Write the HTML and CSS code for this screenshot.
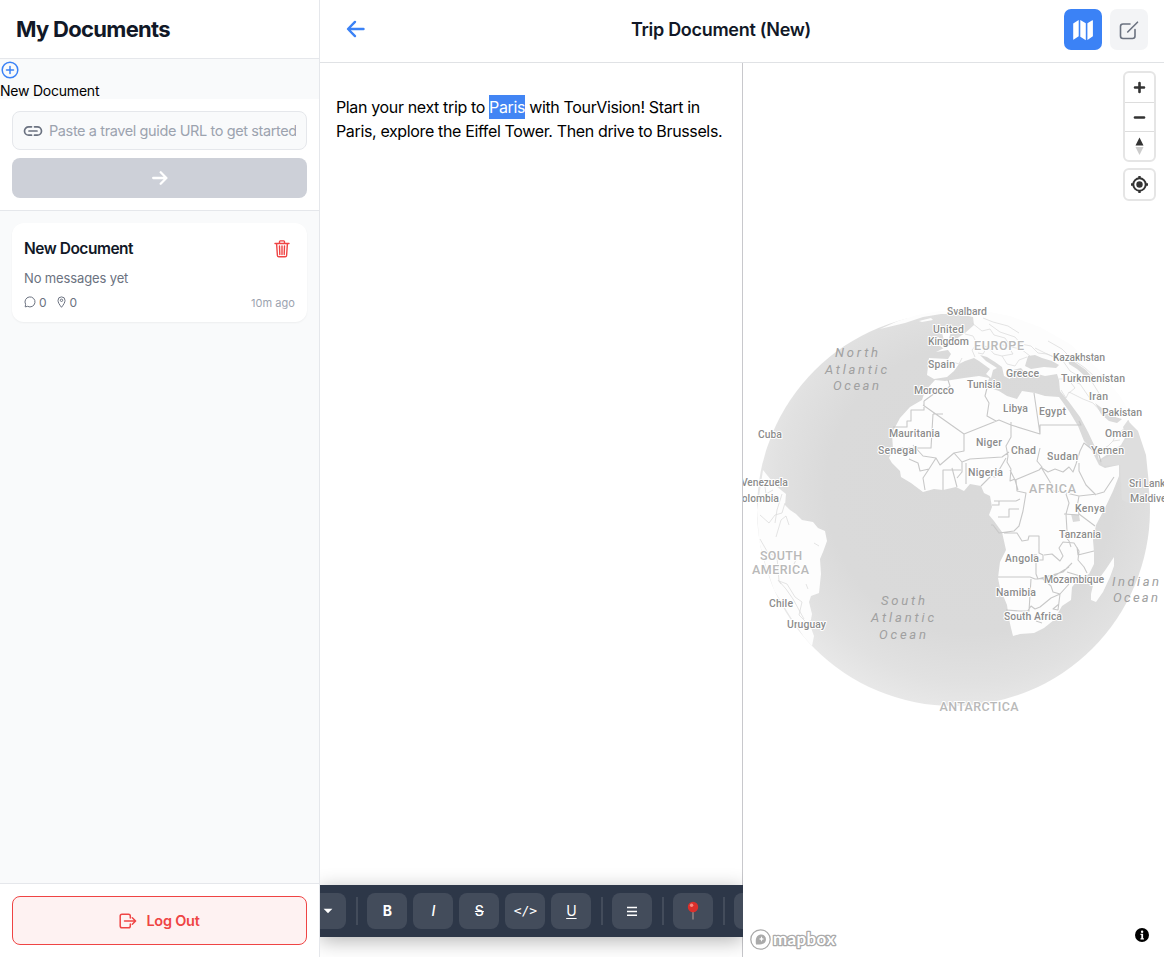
FILE: index.html
```html
<!DOCTYPE html>
<html lang="en">
<head>
<meta charset="utf-8">
<title>Trip Document (New)</title>
<link rel="stylesheet" href="styles.css">
</head>
<body>
<div class="app">
  <aside class="sidebar">
    <header class="side-head"><h1 class="side-title">My Documents</h1></header>
    <div class="new-doc">
      <svg class="plus" viewBox="0 0 20 20" width="20" height="20"><circle cx="10" cy="10" r="7.8"/><path d="M10 6.5v7M6.5 10h7"/></svg>
      <span class="new-label">New Document</span>
    </div>
    <div class="url-form">
      <div class="url-field">
        <svg class="link" viewBox="0 0 20 12" width="20" height="12"><path d="M8.500 1.800H5.700a4.200 4.200 0 0 0 0 8.400h2.800M11.500 1.800h2.800a4.200 4.200 0 0 1 0 8.400h-2.800M6 6h8"/></svg>
        <span class="url-placeholder">Paste a travel guide URL to get started</span>
      </div>
      <div class="go"><svg viewBox="0 0 16 14" width="16" height="14"><path d="M1.200 7h13M8.700 1.300L14.400 7l-5.700 5.700"/></svg></div>
    </div>
    <div class="doc-list">
      <article class="doc">
        <div class="doc-top">
          <h2 class="doc-title">New Document</h2>
          <svg class="trash" viewBox="0 0 16 18" width="16" height="18"><path d="M1 3.500h14M5.500 3.200V1.700q0-.8.8-.8h3.400q.8 0 .8.8v1.500M2.600 3.700l.8 11.800q.1 1.300 1.400 1.300h6.400q1.300 0 1.400-1.300l.8-11.800M5.500 6l.3 8.500M8 6v8.500M10.500 6l-.3 8.500"/></svg>
        </div>
        <p class="doc-text">No messages yet</p>
        <div class="doc-meta">
          <svg class="chat" viewBox="0 0 12 12" width="12" height="12"><path d="M1.200 10.900l.4-2.600a5 5 0 1 1 2 2z"/></svg>
          <span class="count">0</span>
          <svg class="pin" viewBox="0 0 9 12" width="9" height="12"><path d="M4.500 11.300C2.200 8.300 1 6.300 1 4.400a3.500 3.500 0 0 1 7 0c0 1.900-1.200 3.900-3.500 6.900z"/><circle cx="4.500" cy="4.300" r="1.200"/></svg>
          <span class="count">0</span>
          <span class="ago">10m ago</span>
        </div>
      </article>
    </div>
    <footer class="side-foot">
      <div class="logout">
        <svg viewBox="0 0 18 16" width="18" height="16"><path d="M11.300 5V3q0-1.800-1.800-1.800H3Q1.200 1.200 1.200 3v10q0 1.800 1.800 1.800h6.500q1.800 0 1.800-1.800v-2M5.500 8h11M13.300 4.800L16.600 8l-3.300 3.200"/></svg>
        <span class="logout-text">Log Out</span>
      </div>
    </footer>
  </aside>
  <main class="main">
    <header class="top">
      <svg class="back" viewBox="0 0 20 18" width="20" height="18"><path d="M17.500 9H2.200M9 1.900L2 9l7 7.100"/></svg>
      <h2 class="top-title">Trip Document (New)</h2>
      <div class="views">
        <div class="view active"><svg viewBox="0 0 22 22" width="22" height="22"><path d="M1.200 4.500L6.700 1v16.300L1.800 20.600q-.6.300-.6-.4zM8.300 1l5.500 3.200v17L8.300 17.800zM15.400 4.200L20.300 1.300q.6-.3.600.4v15.600l-5.500 3.700z"/></svg></div>
        <div class="view"><svg class="edit" viewBox="0 0 20 20" width="20" height="20"><path d="M11 4H4Q1.500 4 1.500 6.500v9.500Q1.500 18.500 4 18.500h9.500Q16 18.500 16 16V9.500M8.700 12l9.800-9.800"/></svg></div>
      </div>
    </header>
    <div class="work">
      <section class="editor">
        <div class="page">
          <p class="prose">Plan your next trip to <mark class="place">Paris</mark> with TourVision! Start in<br>Paris, explore the Eiffel Tower. Then drive to Brussels.</p>
        </div>
        <div class="toolbar">
          <span class="tool cut-left"><svg viewBox="0 0 10 6" width="10" height="6"><path d="M.6.700h8.800L5 5.200z" fill="#fff"/></svg></span>
          <span class="sep"></span>
          <span class="tool bold">B</span>
          <span class="tool italic">I</span>
          <span class="tool strike">S</span>
          <span class="tool code">&lt;/&gt;</span>
          <span class="tool under">U</span>
          <span class="sep"></span>
          <span class="tool"><svg viewBox="0 0 10 10" width="10" height="10"><path d="M0 1.500h10M0 5.500h10M0 9.300h10" stroke="#fff" stroke-width="1.500"/></svg></span>
          <span class="sep"></span>
          <span class="tool"><svg viewBox="0 0 14 20" width="14" height="20"><path d="M7 9v9" stroke="#8f8583" stroke-width="1.500" stroke-linecap="round"/><circle cx="7" cy="6" r="5.200" fill="#dc2f2b"/><circle cx="5.600" cy="4.200" r="1.700" fill="#f98a80"/></svg></span>
          <span class="sep"></span>
          <span class="tool"></span>
        </div>
      </section>
      <section class="map">
        <svg class="globe" viewBox="743 63 421 894" width="421" height="894">
          <defs>
            <radialGradient id="sea" gradientUnits="userSpaceOnUse" cx="970" cy="490" r="240">
              <stop offset="0" stop-color="#d9d9d9"/><stop offset=".6" stop-color="#dadada"/><stop offset=".8" stop-color="#e1e1e1"/><stop offset="1" stop-color="#ececec"/>
            </radialGradient>
          </defs>
          <circle cx="953.500" cy="509.500" r="196.500" fill="url(#sea)"/>
          <g class="land">
            <path d="M880 329L898 321 917 315 940 311 960 310 985 311 1010 316 1040 327 1070 344 1098 369 1120 396 1134 420 1128 420 1123 427 1126 436 1121 445 1111 452 1099 460 1096 449 1088 432 1080 417 1069 402 1060 391 1059 380 1057 374 1045 376 1034 373 1027 375 1021 368 1013 370 1010 379 1004 376 1002 367 995 362 987 357 980 355 986 361 997 368 993 370 991 378 986 374 990 369 979 361 974 358 965 361 959 364 954 371 947 377 934 379 927 375 929 358 948 359 951 354 948 350 936 352 950 345 959 337 965 333 974 325 973 317 960 314 941 314 923 317 905 323z"/>
            <path d="M935 380L945 381 964 378 979 376 989 378 987 387 999 391 1007 396 1017 399 1022 391 1035 393 1045 396 1059 397 1069 411 1078 426 1084 441 1091 449 1099 465 1105 468 1119 465 1119 476 1113 491 1105 508 1096 525 1093 540 1094 552 1094 564 1089 574 1078 580 1072 587 1071 600 1062 606 1054 620 1044 628 1034 633 1020 634 1013 636 1011 628 1009 619 1007 605 1000 588 998 578 1000 562 1006 550 1002 532 994 521 989 515 992 507 990 496 984 493 981 486 970 484 964 491 956 487 943 490 934 489 923 492 911 483 901 477 900 471 892 463 889 458 893 450 892 433 900 418 910 407 922 400 925 391z"/>
            <path d="M1114 557L1106 569 1101 576 1094 581 1091 594 1091 600 1096 602 1103 592 1110 577 1114 566z"/>
            <path d="M763 470L767 475 776 486 786 494 785 505 790 510 796 514 802 520 813 522 818 528 825 531 827 541 823 552 820 559 821 574 819 593 811 596 809 602 812 614 810 625 814 636 812 646 804 637 790 616 774 590 765 563 759 541 757 510z"/>
            <path d="M942 333l5-5 4 4-2 6 5 6-10 5-5-4 5-5zM935 339l4-2 1 5-4 4-3-3zM919 321l12-3 2 2-11 2z"/>
          </g>
          <g fill="#dadada"><path d="M1028 356l7-1 7 3 10 3 7 4-3 3-12-1-13 2-6-3zM1068 358l8 5 10 7 5 6-5 1-9-8-8-5zM1095 403l8 6 9 7 10 3-5 4-8-2-8-7zM1071 514l8 1 1 6-7 1z"/></g>
          <path fill="#dedede" d="M1103 466L1101 460 1112 455 1122 448 1127 437 1125 427 1130 423 1138 431 1146 455 1149 485 1143 510 1122 500 1120 465z"/>
          <g class="borders">
            <path d="M924 401v9h-13v11h-4v6h-14M923 405l41 29 10-4 25-10 12 5 29 9M924 401l11-8 10-2 5-5-2-6M933 414l-2 34h-32M933 414h10M987 388l-2 8 4 7-2 13 9 5M1034 393l6 41v-9h41l-2-4M1011 422v15l-5 9 2 10-1 6 4 7-1 12 5-2M964 434v17l-10 2-14 12-4-7-13-2-10-11M954 453l8 9 8-3 32-2 7-5M962 462v10l-5 6M936 458l-7 11-9 2-2-8-9-4M929 469l-6 9 2 12M943 490v-20h18M957 487l-5-19M966 484v-21M981 486l10-10 4 1 11-19M994 501h22l4-2M1010 470l5 10 24-10 3-3-5-6 3-13M1015 480l3 10M1042 468l6 4 7-3 8 3 6-5 4 5 3-8 4-13 4-8 15 12 2 7M1041 467l9 15 3 9 13 1M1066 493l13 3 18-2 7-2 10-15M1079 496l-2 11 2 7 16 12M1079 463v8l7 14 10 10M1066 494l3 9-3 11 1 17M1016 480l1 11 9 2-3 18-4 15-5 5-15 2-6-8h-2M992 505h7v-4M998 517h11v-8h10M1004 533h13l5 8 6-1 1-4h10v17l4 2v5h-9v-6M1036 554v20l2 5 25-7 9-9M998 577h32l5 2 16-1 18-11M1044 555l8-1 8 7 3-5-4-8 4-6 11 1 5 8-1 9 6 7 3 6M1077 547l1 8 16-4M1067 572l13 4M1060 530l9 11 2 6M1064 514l15 1M1031 579l-2 32h-9l-14-1M1043 579l8 7 2 6 7 2 9-10M1060 594l-9 4-11 9-5 2-4-3-4 6M1060 594l-2 16-5-1 6-5M1036 621l6 2"/>
            <path d="M1061 390l5 8 3-6 14 7 10 4 11 12M1069 393l6-5-7-9h-9M1068 379l12 5 11 16M1098 452l10-6 5-5 7-1M1113 441l3-7 8-5M965 334l8 2 4 8-5 6 3 7M977 344l10 3-4 7-5-1M988 347l9-3 11 2 5 8-11 2-8-2zM1002 356l5 8 8 2 4-6 8-3M972 323l10 8 8-2 4 6 11 3 6 9 10 2 9 7M989 324l11 8 15 5 6 7 10 2 7 7 9 1 12 5M1035 348l12 6 16 7 7 10 10 6 12 5 10 16M1048 341l14 8 10 10 13 9 9 8M983 318l10 4 15 4 11 7M950 361l9 3 3-6"/>
            <path d="M760 515l9 8 6-8 7-2 3-10M775 523l2-13 5-16M764 480l2 14 7-4M776 537l5-17 5-4 3 9M760 539l8 14 9 4 2 24 7 8 7 10 11 20M779 581l8 3 8 13 7 5-3 13 7 7 5-1M781 584l-3-4M794 564l2-4M808 589l-2-5M814 543l5 3"/>
          </g>
          <g class="country">
            <text x="947" y="315" textLength="40">Svalbard</text><text x="933" y="333" textLength="31">United</text><text x="928" y="345" textLength="41">Kingdom</text><text x="928" y="368" textLength="27">Spain</text><text x="914" y="394" textLength="40">Morocco</text><text x="967" y="388" textLength="34">Tunisia</text><text x="1006" y="377" textLength="33">Greece</text><text x="1053" y="361" textLength="52">Kazakhstan</text><text x="1061" y="382" textLength="64">Turkmenistan</text><text x="1089" y="400" textLength="19">Iran</text><text x="1102" y="416" textLength="40">Pakistan</text><text x="1105" y="437" textLength="28">Oman</text><text x="1091" y="454" textLength="33">Yemen</text><text x="1003" y="412" textLength="25">Libya</text><text x="1039" y="415" textLength="27">Egypt</text><text x="976" y="446" textLength="26">Niger</text><text x="1011" y="454" textLength="25">Chad</text><text x="1047" y="460" textLength="31">Sudan</text><text x="968" y="476" textLength="35">Nigeria</text><text x="889" y="437" textLength="51">Mauritania</text><text x="878" y="454" textLength="39">Senegal</text><text x="758" y="438" textLength="24">Cuba</text><text x="741" y="486" textLength="47">Venezuela</text><text x="735" y="502" textLength="44">Colombia</text><text x="1129" y="487" textLength="42">Sri Lanka</text><text x="1130" y="502" textLength="42">Maldives</text><text x="1075" y="512" textLength="30">Kenya</text><text x="1059" y="538" textLength="42">Tanzania</text><text x="1005" y="562" textLength="34">Angola</text><text x="1044" y="583" textLength="60">Mozambique</text><text x="996" y="596" textLength="40">Namibia</text><text x="1004" y="620" textLength="58">South Africa</text><text x="769" y="607" textLength="24">Chile</text><text x="787" y="628" textLength="39">Uruguay</text>
          </g>
          <g class="continent">
            <text x="974" y="349.500" textLength="50">EUROPE</text><text x="1029" y="492.500" textLength="47">AFRICA</text><text x="760" y="560" textLength="42">SOUTH</text><text x="752" y="574" textLength="57">AMERICA</text><text x="939.500" y="710.500" textLength="79">ANTARCTICA</text>
          </g>
          <g class="ocean">
            <text x="835" y="357" textLength="43">North</text><text x="825" y="374" textLength="62">Atlantic</text><text x="833" y="390" textLength="46">Ocean</text><text x="881" y="605" textLength="44">South</text><text x="871" y="622" textLength="63">Atlantic</text><text x="879" y="639" textLength="47">Ocean</text><text x="1112" y="586" textLength="47">Indian</text><text x="1113" y="602" textLength="45">Ocean</text>
          </g>
          <g class="mapbox">
            <circle cx="760.500" cy="939.500" r="9.700" fill="#fff" stroke="#aaa" stroke-width="1.300"/>
            <path d="M756 944.500C755 938 757 934.500 761.500 934.500a4.700 4.700 0 0 1 4.500 4.700C766 943.500 762 945 756 944.500z" fill="#aaa"/>
            <path d="M761.500 936.300l.8 1.900 1.900.8-1.900.8-.8 1.900-.8-1.900-1.900-.8 1.900-.8z" fill="#fff"/>
            <text x="773" y="944.500" textLength="62">mapbox</text>
          </g>
        </svg>
        <div class="controls">
          <div class="group">
            <span class="ctl"><svg viewBox="0 0 29 29" width="29" height="29"><path d="M14.500 10v9M10 14.500h9" stroke="#333" stroke-width="2.600" stroke-linecap="round"/></svg></span>
            <span class="ctl"><svg viewBox="0 0 29 29" width="29" height="29"><path d="M10 14.500h9" stroke="#333" stroke-width="2.600" stroke-linecap="round"/></svg></span>
            <span class="ctl"><svg viewBox="0 0 29 29" width="29" height="29"><path d="M10.500 13.500l4-8 4 8z" fill="#333"/><path d="M10.500 15l4 8 4-8z" fill="#ccc"/></svg></span>
          </div>
          <div class="group">
            <span class="ctl"><svg viewBox="0 0 29 29" width="29" height="29"><circle cx="14.500" cy="14.500" r="6.200" fill="none" stroke="#333" stroke-width="2"/><circle cx="14.500" cy="14.500" r="3.200" fill="#333"/><path d="M14.500 6v2.500M14.500 20.500V23M6 14.500h2.500M20.500 14.500H23" stroke="#333" stroke-width="2.400"/></svg></span>
          </div>
        </div>
        <svg class="info" viewBox="0 0 14 14" width="14" height="14"><circle cx="7" cy="7" r="7"/><path d="M5.500 5.800h2.600v4.400h.8v1.200H5.500v-1.200h.8V7h-.8z" fill="#fff"/><circle cx="7.100" cy="3.700" r="1.200" fill="#fff"/></svg>
      </section>
    </div>
  </main>
</div>
</body>
</html>
```
FILE: styles.css
```css
* { box-sizing: border-box; }
body { margin: 0; font-family: Inter, "Liberation Sans", sans-serif; color: #111827; background: #fff; }
h1, h2, p { margin: 0; }
svg { display: block; flex: none; }
.app { display: flex; width: 1164px; height: 957px; overflow: hidden; }

.sidebar { display: flex; flex-direction: column; width: 320px; flex: none; background: #f9fafb; border-right: 1px solid #e5e7eb; }
.side-head { height: 59px; padding: 16px; background: #fff; border-bottom: 1px solid #e5e7eb; }
.side-title { font-size: 22px; line-height: 26px; font-weight: 700; letter-spacing: -.7px; white-space: nowrap; }
.new-doc { height: 40px; padding-top: 1px; color: #000; }
.plus { fill: none; stroke: #3b82f6; stroke-width: 1.5; stroke-linecap: round; }
.new-label { display: block; margin-top: 1px; font-size: 14px; line-height: 20px; letter-spacing: -.22px; white-space: nowrap; }
.url-form { height: 112px; padding: 12px; background: #fff; border-bottom: 1px solid #e5e7eb; display: flex; flex-direction: column; gap: 8px; }
.url-field { height: 39px; border: 1px solid #e5e7eb; border-radius: 8px; background: #f9fafb; padding: 0 10px; display: flex; align-items: center; gap: 6px; }
.link { fill: none; stroke: #6b7280; stroke-width: 1.7; stroke-linecap: round; }
.url-placeholder { flex: 1; overflow: hidden; white-space: nowrap; color: #9ca3af; font-size: 14.5px; letter-spacing: -.39px; }
.go { height: 40px; border-radius: 8px; background: #cdd0d8; display: flex; align-items: center; justify-content: center; }
.go svg { fill: none; stroke: #fff; stroke-width: 2.3; stroke-linecap: round; stroke-linejoin: round; }
.doc-list { flex: 1; padding: 12px; }
.doc { height: 99px; background: #fff; border-radius: 12px; padding: 11px 12px 12px; box-shadow: 0 1px 2px rgba(0,0,0,.05); }
.doc-top { display: flex; align-items: center; justify-content: space-between; height: 29px; padding-right: 5px; }
.doc-title { font-size: 15.5px; font-weight: 600; letter-spacing: -.48px; }
.trash { fill: none; stroke: #ef4444; stroke-width: 1.4; stroke-linecap: round; }
.doc-text { margin-top: 6px; font-size: 13px; line-height: 18px; letter-spacing: -.13px; color: #6b7280; white-space: nowrap; }
.doc-meta { display: flex; align-items: center; height: 16px; margin-top: 7px; color: #6b7280; font-size: 12px; }
.chat, .pin { fill: none; stroke: #6b7280; stroke-width: 1; }
.chat { margin-right: 3px; }
.pin { margin: 0 4px 0 10px; }
.ago { margin-left: auto; font-size: 11px; color: #9ca3af; padding-top: 1px; letter-spacing: .05px; }
.side-foot { height: 74px; padding: 12px; background: #fff; border-top: 1px solid #e5e7eb; }
.logout { height: 49px; border: 1px solid #ef4444; border-radius: 8px; background: #fef2f2; display: flex; align-items: center; justify-content: center; gap: 9px; color: #ef4444; }
.logout svg { fill: none; stroke: #ef4444; stroke-width: 1.5; stroke-linecap: round; stroke-linejoin: round; }
.logout-text { font-size: 14.5px; font-weight: 600; letter-spacing: -.25px; white-space: nowrap; }

.main { flex: 1; min-width: 0; display: flex; flex-direction: column; }
.top { height: 63px; border-bottom: 1px solid #e0e2e5; display: flex; align-items: center; justify-content: space-between; padding: 0 16px 3px 26px; }
.back { fill: none; stroke: #3b82f6; stroke-width: 2.4; stroke-linecap: round; stroke-linejoin: round; margin-bottom: 2px; }
.top-title { font-size: 18px; font-weight: 600; letter-spacing: -.3px; margin-left: 12px; white-space: nowrap; }
.views { display: flex; gap: 8px; }
.view { width: 38px; height: 41px; border-radius: 7px; background: #f3f4f6; display: flex; align-items: center; justify-content: center; }
.active { background: #3b82f6; }
.active svg { fill: #fff; }
.edit { fill: none; stroke: #6b7280; stroke-width: 1.6; stroke-linecap: round; }
.work { flex: 1; display: flex; min-height: 0; }

.editor { width: 423px; flex: none; position: relative; overflow: hidden; }
.page { height: 100%; border-right: 1px solid #c8c8cc; padding: 32px 16px; }
.prose { color: #000; font-size: 16px; line-height: 24px; letter-spacing: -.36px; white-space: nowrap; }
.place { display: inline-block; height: 24px; background: #4285f4; color: #fff; }
.toolbar { position: absolute; left: 0; right: 0; bottom: 20px; height: 52px; background: #2d3748; display: flex; align-items: center; gap: 6px; overflow: visible; box-shadow: 0 4px 20px rgba(0,0,0,.3); }
.tool { width: 40px; height: 36px; flex: none; border-radius: 8px; background: #434c5b; color: #fff; display: flex; align-items: center; justify-content: center; font-size: 14px; line-height: 18px; }
.cut-left { width: 26.4px; border-radius: 0 8px 8px 0; padding-right: 10px; }
.sep { width: 2px; height: 28px; margin: 0 3.5px; flex: none; background: #434c5b; }
.bold { font-weight: 700; }
.italic { font-style: italic; font-weight: 500; }
.strike { text-decoration: line-through; font-weight: 500; }
.code { font-family: "DejaVu Sans Mono", monospace; font-size: 13px; }
.under { text-decoration: underline; text-underline-offset: 2px; }

.map { flex: 1; position: relative; min-width: 0; overflow: hidden; }
.land { fill: #fdfdfd; }
.borders { fill: none; stroke: #c8c8c8; stroke-width: 1.1; stroke-linejoin: round; }
.borders path:nth-child(n+2) { stroke-width: .7; stroke: #d8d8d8; }
.globe text { font-family: Roboto, sans-serif; paint-order: stroke; stroke: #fff; stroke-width: 2px; stroke-linejoin: round; }
.country text { font-size: 10.5px; font-weight: 500; fill: #8c8c8c; }
.continent text { font-size: 12.5px; font-weight: 500; fill: #b9b9b9; }
.ocean text { font-size: 13px; font-style: italic; fill: #a0a0a0; stroke: none; }
.mapbox text { font-family: Lato, sans-serif; font-size: 17px; font-weight: 700; fill: #fff; stroke: #aaa; stroke-width: 2.6px; }
.controls { position: absolute; top: 8px; right: 8px; display: flex; flex-direction: column; gap: 6px; }
.group { border: 2px solid #e5e5e5; border-radius: 6px; background: #fff; width: 33px; overflow: hidden; }
.ctl { display: block; height: 29px; }
.ctl + .ctl { border-top: 1px solid #ddd; }
.info { position: absolute; right: 15px; bottom: 15px; }
```
